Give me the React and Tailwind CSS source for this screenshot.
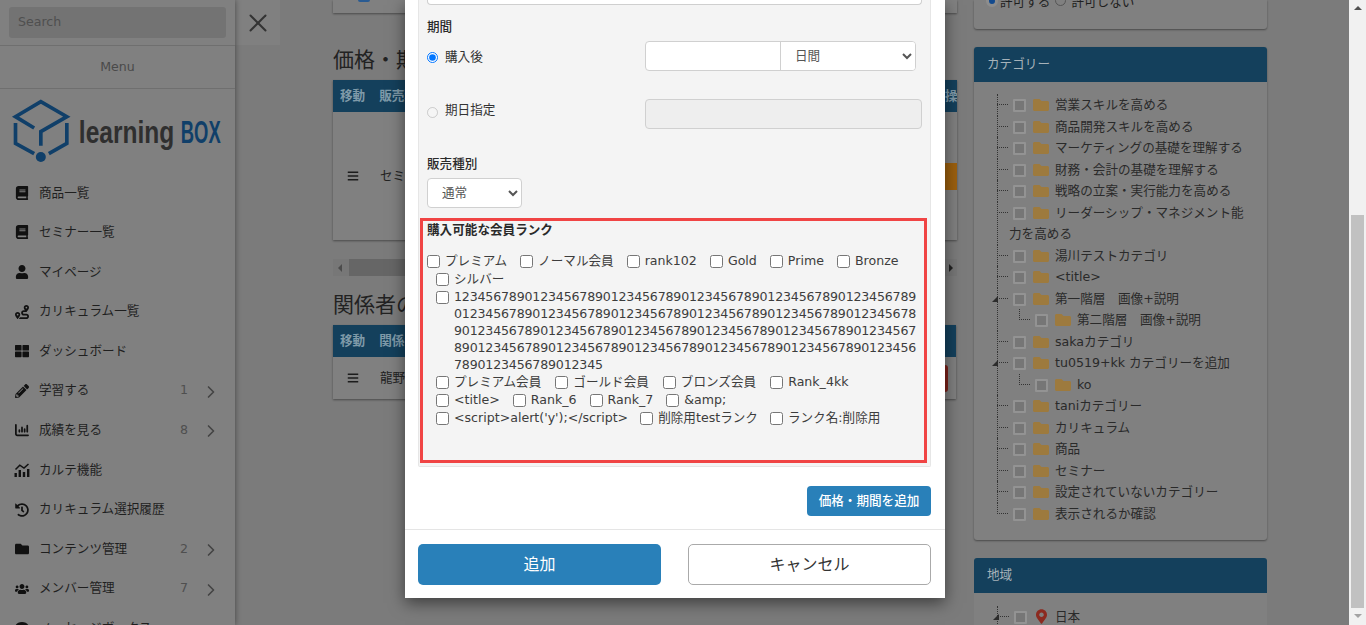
import { FaBook, FaUser, FaRoute, FaThLarge, FaPencilAlt, FaHistory, FaFolder, FaUsers, FaComment, FaBars, FaMapMarkerAlt } from "react-icons/fa";
import { FaChartColumn } from "react-icons/fa6";
import { ChevronRight, X } from "lucide-react";

//colours below are the dimmed ones, the page sits behind the modal backdrop

function KarteIcon() {
  return (
    <svg viewBox="0 0 16 14" className="w-[16px] h-[14px]" fill="currentColor">
      <rect x="0.5" y="10" width="2.4" height="4" />
      <rect x="4.6" y="7" width="2.4" height="7" />
      <rect x="8.8" y="9" width="2.4" height="5" />
      <rect x="13" y="6" width="2.4" height="8" />
      <path d="M1.5 6.5 5.8 2.2 10 5 14.5 1" fill="none" stroke="currentColor" strokeWidth="1.5" />
    </svg>
  );
}

const menu = [
  { icon: <FaBook />, label: "商品一覧" },
  { icon: <FaBook />, label: "セミナー一覧" },
  { icon: <FaUser />, label: "マイページ" },
  { icon: <FaRoute />, label: "カリキュラム一覧" },
  { icon: <FaThLarge />, label: "ダッシュボード" },
  { icon: <FaPencilAlt />, label: "学習する", count: 1 },
  { icon: <FaChartColumn />, label: "成績を見る", count: 8 },
  { icon: <KarteIcon />, label: "カルテ機能" },
  { icon: <FaHistory />, label: "カリキュラム選択履歴" },
  { icon: <FaFolder />, label: "コンテンツ管理", count: 2 },
  { icon: <FaUsers />, label: "メンバー管理", count: 7 },
  { icon: <FaComment />, label: "メッセージボックス" },
];

const categories = [
  { label: "営業スキルを高める" },
  { label: "商品開発スキルを高める" },
  { label: "マーケティングの基礎を理解する" },
  { label: "財務・会計の基礎を理解する" },
  { label: "戦略の立案・実行能力を高める" },
  { label: "リーダーシップ・マネジメント能力を高める" },
  { label: "湯川テストカテゴリ" },
  { label: "<title>" },
  { label: "第一階層　画像+説明", open: true, child: "第二階層　画像+説明" },
  { label: "sakaカテゴリ" },
  { label: "tu0519+kk カテゴリーを追加", open: true, child: "ko" },
  { label: "taniカテゴリー" },
  { label: "カリキュラム" },
  { label: "商品" },
  { label: "セミナー" },
  { label: "設定されていないカテゴリー" },
  { label: "表示されるか確認" },
];

const ranks = [
  { gap: "gap-[13px]", items: ["プレミアム", "ノーマル会員", "rank102", "Gold", "Prime", "Bronze"] },
  { gap: "gap-[13px]", items: ["シルバー"] },
  { gap: "gap-[13px]", items: ["1234567890".repeat(25) + "12345"] },
  { gap: "gap-[14px]", items: ["プレミアム会員", "ゴールド会員", "ブロンズ会員", "Rank_4kk"] },
  { gap: "gap-[13px]", items: ["<title>", "Rank_6", "Rank_7", "&amp;"] },
  { gap: "gap-[12px]", items: ["<script>alert('y');</script>", "削除用testランク", "ランク名:削除用"] },
];

function TreeBox() {
  return <span className="inline-block align-[-3px] w-[13px] h-[13px] border-2 border-[#939393] bg-[#767676] rounded-[1px]" />;
}

function TreeFolder() {
  return <FaFolder className="inline-block align-[-4px] ml-[7px] mr-[6px] w-[16px] h-[16px] text-[#9d7a3e]" />;
}

function TreeArrow() {
  return <span className="absolute left-[-5px] top-[8px] w-0 h-0 border-l-[6px] border-l-transparent border-b-[6px] border-b-[#2c2c2c]" />;
}

function TreeRow({ item, last }) {
  return (
    <li className="relative pl-[12px]">
      <span className={`absolute left-0 top-0 border-l border-dotted border-[#333] ${last ? "h-[11px]" : "h-full"}`} />
      <span className="absolute left-0 top-[10px] w-[11px] border-t border-dotted border-[#333]" />
      {item.open && <TreeArrow />}
      <span className="ml-[4px]" />
      <TreeBox />
      <TreeFolder />
      {item.label}
      {item.child && (
        <div className="relative ml-[10px] pl-[12px] h-[21.5px]">
          <span className="absolute left-0 top-0 h-[11px] w-[11px] border-l border-b border-dotted border-[#333]" />
          <span className="ml-[4px]" />
          <TreeBox />
          <TreeFolder />
          {item.child}
        </div>
      )}
    </li>
  );
}

function Sidebar() {
  return (
    <aside className="w-[235px] shrink-0 h-full bg-[#808080] shadow-[0_0_6px_rgba(0,0,0,0.45)] z-10 text-[12.6px] text-[#1f1f1f]">
      <div className="h-[46px] px-[9px] pt-[7px] border-b border-[#6f6f6f]">
        <div className="h-[31px] rounded-[3px] bg-[#737373] pl-[9px] leading-[30px] text-[#4f4f4f]">Search</div>
      </div>
      <div className="h-[43px] border-b border-[#6f6f6f] flex items-center justify-center text-[#4a4a4a]">Menu</div>
      <div className="h-[84px] pl-[8px] pt-[6px]">
        <svg viewBox="0 0 650 210" className="w-[217px] h-[70px]">
          <g fill="none" stroke="#103f69" strokeWidth="11">
            <path d="M78 99 L22 65 L98 20 L176 65 L98 110 L98 152" />
            <path d="M22 84 V145 L78 176" />
            <path d="M176 84 V145 L122 176" />
          </g>
          <circle cx="98" cy="186" r="15" fill="#103f69" />
          <text transform="translate(212 143) scale(0.784 1)" fontFamily="'Liberation Sans',sans-serif" fontWeight="700" fontSize="94" fill="#2f2f2f">learning</text>
          <text transform="translate(518 143) scale(0.6 1)" fontFamily="'Liberation Sans',sans-serif" fontWeight="700" fontSize="92" fill="#103f69">BOX</text>
        </svg>
      </div>
      <nav>
        {menu.map((m) => (
          <div key={m.label} className="flex items-center h-[39.6px] pl-[14px] pr-[19px]">
            <span className="w-[16px] flex justify-center text-[14px] text-[#111]">{m.icon}</span>
            <span className="ml-[9px] flex-1 leading-none">{m.label}</span>
            {m.count && (
              <>
                <span className="text-[#4f4f4f]">{m.count}</span>
                <ChevronRight size={20} strokeWidth={2} className="ml-[13px] mr-[-5px] mt-[2px] text-[#444]" />
              </>
            )}
          </div>
        ))}
      </nav>
    </aside>
  );
}

function UnderTable({ head, first, height, btnClass, action }) {
  return (
    <div className="bg-[#808080] shadow-[0_1px_2px_rgba(0,0,0,0.4)]">
      <div className="flex items-center h-[32px] bg-[#14405c] font-bold text-[#7f9aa9]">
        <span className="ml-[7px]">移動</span>
        <span className="ml-[14px] flex-1">{head}</span>
        {action && <span className="w-[12px] overflow-hidden whitespace-nowrap">{action}</span>}
      </div>
      <div className={`flex items-center ${height}`}>
        <FaBars className="ml-[14px] w-[12px] h-[12px] text-[#1c1c1c]" />
        <span className="ml-[21px] flex-1">{first}</span>
        <span className={btnClass} />
      </div>
    </div>
  );
}

function Under() {
  return (
    <main className="flex-1 flex gap-[17px] pl-[98px] text-[12.6px] text-[#222]">
      <div className="w-[624px] shrink-0">
        <div className="h-[13px] bg-[#808080] shadow-[0_1px_2px_rgba(0,0,0,0.4)] overflow-hidden">
          <span className="block ml-[25px] mt-[-10px] w-[12px] h-[12px] bg-[#2a5b92] rounded-[2px]" />
        </div>
        <h2 className="mt-[33px] h-[34px] text-[21px] leading-[28px] text-[#222]">価格・期間</h2>
        <UnderTable head="販売種別" first="セミナー" height="h-[128px]" btnClass="w-[12px] h-[27px] bg-[#9c600e]" action="操作" />
        <div className="mt-[19px] h-[17px] flex items-center bg-[#777]">
          <span className="ml-[5px] w-0 h-0 border-y-[4px] border-y-transparent border-r-[4px] border-r-[#4c4c4c]" />
          <span className="ml-[7px] w-[500px] h-[17px] bg-[#666]" />
          <span className="ml-auto mr-[4px] w-0 h-0 border-y-[4px] border-y-transparent border-l-[4px] border-l-[#222]" />
        </div>
        <h2 className="mt-[15px] h-[34px] text-[21px] leading-[28px] text-[#222]">関係者の設定</h2>
        <div className="w-[623px]">
          <UnderTable head="関係者" first="龍野" height="h-[42px]" btnClass="mr-[8px] w-[4px] h-[27px] rounded-r-[3px] bg-[#7d2119]" />
        </div>
      </div>
      <div className="w-[293px] shrink-0">
        <div className="h-[29px] overflow-hidden rounded-b-[3px] bg-[#808080] shadow-[0_1px_2px_rgba(0,0,0,0.4)] pl-[12px] flex items-start gap-[2px] text-[#1f1f1f]">
          <span className="-mt-[5px] w-[12px] h-[12px] rounded-full border-[3px] border-[#8d8d8d] bg-[#124a8e]" />
          <span className="-mt-[5px] leading-[14px]">許可する</span>
          <span className="-mt-[5px] ml-[3px] w-[11px] h-[11px] rounded-full border border-[#555]" />
          <span className="-mt-[5px] ml-[3px] leading-[14px]">許可しない</span>
        </div>
        <section className="mt-[18px] h-[493px] rounded-[3px] bg-[#808080] shadow-[0_1px_2px_rgba(0,0,0,0.4)] overflow-hidden">
          <div className="h-[35px] bg-[#14405c] pl-[13px] flex items-center text-[#a6b2b9]">カテゴリー</div>
          <ul className="mt-[12px] ml-[23px] w-[252px] leading-[21.5px] text-[#2a2a2a]">
            {categories.map((c, i) => (
              <TreeRow key={c.label} item={c} last={i === categories.length - 1} />
            ))}
          </ul>
        </section>
        <section className="mt-[18px] h-[70px] rounded-t-[3px] bg-[#808080] overflow-hidden">
          <div className="h-[35px] bg-[#14405c] pl-[13px] flex items-center text-[#a6b2b9]">地域</div>
          <ul className="mt-[13px] ml-[23px] leading-[21.5px] border-l border-dotted border-[#333] text-[#2a2a2a]">
            <li className="relative pl-[12px]">
              <span className="absolute left-0 top-[10px] w-[11px] border-t border-dotted border-[#333]" />
              <TreeArrow />
              <span className="ml-[4px]" />
              <TreeBox />
              <FaMapMarkerAlt className="inline-block align-[-3px] ml-[9px] mr-[8px] w-[11px] h-[15px] text-[#8c2a20]" />
              日本
            </li>
          </ul>
        </section>
      </div>
    </main>
  );
}

function Scrollbar() {
  return (
    <div className="relative w-[17px] shrink-0 h-full bg-[#f1f1f1] z-30 flex flex-col items-center">
      <span className="mt-[6px] w-0 h-0 border-x-[4px] border-x-transparent border-b-[4px] border-b-[#505050]" />
      <span className="mt-[205px] w-[13px] h-[393px] bg-[#c1c1c1]" />
      <span className="mt-[6px] w-0 h-0 border-x-[4px] border-x-transparent border-t-[4px] border-t-[#a3a3a3]" />
    </div>
  );
}

function RankRow({ row, first }) {
  return (
    <div className={`flex ${row.gap} min-h-[18px] leading-[18px] text-[#3d3d3d] ${first ? "" : "ml-[9px]"}`}>
      {row.items.map((r) => {
        const long = r.length > 100;
        return (
          <label key={r} className={`flex items-start gap-[5px] ${long ? "break-all leading-[17.1px] tracking-[-0.18px]" : ""}`}>
            <input type="checkbox" className="m-0 mt-[3px] w-[13px] h-[13px] shrink-0" readOnly />
            <span className={long ? "w-[464px]" : "whitespace-nowrap"}>{r}</span>
          </label>
        );
      })}
    </div>
  );
}

function Modal() {
  return (
    <div className="absolute left-[405px] top-0 w-[540px] h-[598px] bg-white z-20 shadow-[0_5px_15px_rgba(0,0,0,0.5)] text-[12.6px] text-[#333] flex flex-col">
      <div className="pl-[13px] pr-[14px] flex-1">
        <div className="h-[467px] bg-[#f4f4f4] border-x border-b border-[#e6e6e6] rounded-b-[2px]">
          <div className="ml-[8px] mr-[8px] h-[5px] bg-white border-x border-b border-[#cfcfcf] rounded-b-[4px]" />
          <p className="ml-[8px] mt-[13px] h-[18px] leading-[18px] font-medium text-[#2a2a2a]">期間</p>
          <div className="ml-[8px] mt-[5px] flex h-[30px]">
            <label className="w-[218px] flex items-start gap-[7px] leading-[18px] pt-[7px]">
              <input type="radio" name="period" defaultChecked className="m-0 mt-[4px] w-[11px] h-[11px]" />
              購入後
            </label>
            <div className="w-[271px] flex border border-[#d0d0d0] rounded-[4px] bg-white overflow-hidden">
              <input className="w-[135px] h-full border-r border-[#d0d0d0] outline-none" readOnly />
              <select className="flex-1 pl-[10px] pr-[4px] pb-[2px] text-[#555] outline-none bg-white" defaultValue="日間">
                <option>日間</option>
              </select>
            </div>
          </div>
          <div className="ml-[8px] mt-[28px] flex h-[30px]">
            <label className="w-[218px] flex items-start gap-[7px] leading-[18px] pt-[2px]">
              <input type="radio" name="period" className="m-0 mt-[6px] w-[11px] h-[11px]" disabled />
              期日指定
            </label>
            <div className="w-[277px] border border-[#d0d0d0] rounded-[4px] bg-[#eeeeee]" />
          </div>
          <p className="ml-[8px] mt-[26px] h-[18px] leading-[18px] font-medium text-[#2a2a2a]">販売種別</p>
          <select className="ml-[8px] mt-[5px] w-[95px] h-[30px] pl-[10px] pb-[2px] bg-white border border-[#d0d0d0] rounded-[4px] text-[#555] outline-none" defaultValue="通常">
            <option>通常</option>
          </select>
          <div className="ml-[1px] mt-[10px] w-[507px] h-[245px] border-[3px] border-[#f04444] pl-[4px]">
            <p className="h-[18px] leading-[18px] font-bold text-[#2a2a2a]">購入可能な会員ランク</p>
            <div className="mt-[13px]">
              {ranks.map((row, i) => (
                <RankRow key={i} row={row} first={i === 0} />
              ))}
            </div>
          </div>
        </div>
        <div className="mt-[19px] flex justify-end">
          <button className="w-[124px] h-[30px] rounded-[4px] bg-[#2980b9] text-white font-medium">価格・期間を追加</button>
        </div>
      </div>
      <div className="h-[69px] border-t border-[#e5e5e5] pl-[13px] pr-[14px] pt-[14px] flex justify-between">
        <button className="w-[243px] h-[41px] rounded-[5px] bg-[#2980b9] text-white text-[16px]">追加</button>
        <button className="w-[243px] h-[41px] rounded-[5px] bg-white border border-[#aaa] text-[#333] text-[16px]">キャンセル</button>
      </div>
    </div>
  );
}

export default function App() {
  return (
    <div className="relative flex w-[1366px] h-[625px] overflow-hidden bg-[#7b7b7b] font-['DejaVu_Sans','Noto_Sans_CJK_JP',sans-serif]">
      <Sidebar />
      <Under />
      <Scrollbar />
      <button className="absolute left-[235px] top-0 w-[45px] h-[45px] bg-[#808080] flex items-center justify-center text-[#333] z-0">
        <X size={30} strokeWidth={1.6} />
      </button>
      <Modal />
    </div>
  );
}
